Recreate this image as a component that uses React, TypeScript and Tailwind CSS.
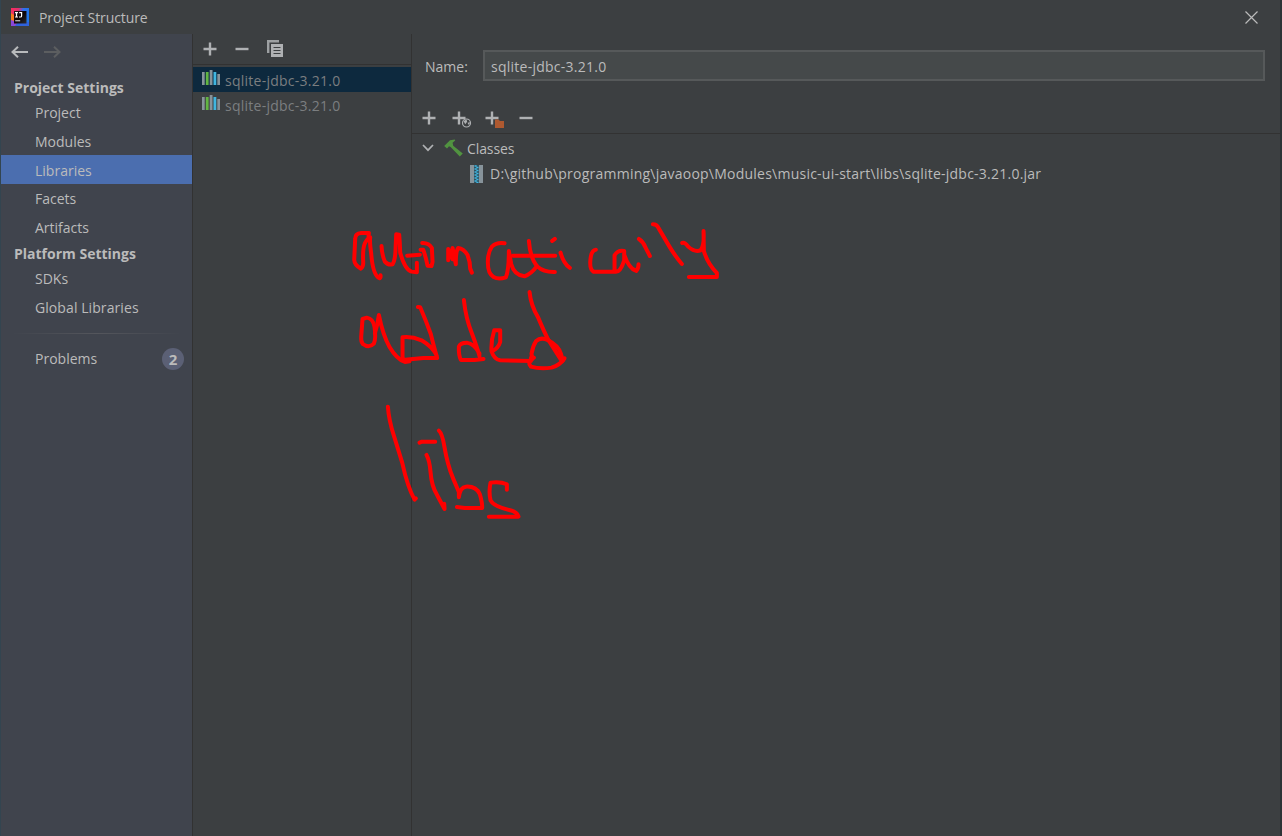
import type { ReactNode } from "react";

function NavItem({ label, className = "" }: { label: string; className?: string }) {
  return <div className={`flex shrink-0 items-center pl-[34px] ${className}`}>{label}</div>;
}

function AppLogo() {
  return (
    <svg width="18" height="18" viewBox="0 0 18 18" className="shrink-0">
      <defs>
        <linearGradient id="lg" x1="0" y1="0" x2="1" y2="0.3">
          <stop offset="0" stopColor="#fb2d5e" />
          <stop offset="0.4" stopColor="#e0306e" />
          <stop offset="0.65" stopColor="#3070f0" />
          <stop offset="1" stopColor="#1f75e8" />
        </linearGradient>
        <linearGradient id="screen" x1="0" y1="0" x2="1" y2="1">
          <stop offset="0" stopColor="#2a1420" />
          <stop offset="0.5" stopColor="#0b0508" />
          <stop offset="1" stopColor="#2c2c30" />
        </linearGradient>
      </defs>
      <rect width="18" height="18" fill="url(#lg)" />
      <path d="M0 5 3 7V14L0 12Z" fill="#f97a20" />
      <path d="M0 12 3 13 6 18H0Z" fill="#8a48d8" />
      <path d="M4 18 7 14H18V18Z" fill="#2f62dc" />
      <rect x="3" y="3" width="12.5" height="12.5" fill="url(#screen)" />
      <path d="M4 4.6H7M5.5 4.6V9M4 9H7M8.2 4.6H10.6V8Q10.6 9 9.5 9H8" fill="none" stroke="#fff" strokeWidth="1.2" />
      <rect x="4.2" y="12" width="5" height="1.4" fill="#aaa" />
    </svg>
  );
}

function Arrow({ right = false }: { right?: boolean }) {
  return (
    <svg width="18" height="14" viewBox="0 0 18 14" fill="none" strokeWidth="2" stroke={right ? "#5c5e60" : "#b8babc"}>
      {right ? <path d="M0 7H15.5M10 1.8 15.5 7 10 12.2" /> : <path d="M17 7H1.5M7 1.8 1.5 7 7 12.2" />}
    </svg>
  );
}

function Plus({ children }: { children?: ReactNode }) {
  return (
    <svg width="22" height="20" viewBox="0 0 22 20" className="shrink-0">
      <path d="M0.5 10H13.5M7 3.5V16.5" stroke="#afb1b3" strokeWidth="2.4" fill="none" />
      {children}
    </svg>
  );
}

function Minus() {
  return (
    <svg width="14" height="20" viewBox="0 0 14 20" className="shrink-0">
      <path d="M0.5 10H13.5" stroke="#afb1b3" strokeWidth="2.4" />
    </svg>
  );
}

function Copy() {
  return (
    <svg width="17" height="18" viewBox="0 0 17 18" className="shrink-0">
      <path d="M1.2 13V1.2H12" fill="none" stroke="#9da0a2" strokeWidth="2.4" />
      <rect x="4" y="4" width="12" height="13" fill="#afb1b3" />
      <path d="M6.5 7.5H13.5M6.5 10.5H13.5M6.5 13.5H13.5" stroke="#3c3f41" />
    </svg>
  );
}

function LibraryIcon() {
  return (
    <svg width="18" height="16" viewBox="0 0 18 16" className="shrink-0">
      <rect x="0" y="2" width="2.7" height="13" fill="#87939a" />
      <rect x="3.8" y="2" width="2.8" height="13" fill="#62b543" />
      <rect x="7.7" y="0" width="2.8" height="15" fill="#87939a" />
      <rect x="11.5" y="2" width="2.8" height="13" fill="#40b6e0" />
      <rect x="15.3" y="4" width="2.7" height="11" fill="#87939a" />
    </svg>
  );
}

function LibraryRow({ selected = false }: { selected?: boolean }) {
  return (
    <div className={`flex h-[25px] items-center gap-[5px] pl-[9px] text-[#7b7e80] ${selected ? "bg-[#0d293e]" : ""}`}>
      <div className="pb-[3px]"><LibraryIcon /></div>
      <span className="pt-[3px] tracking-[0.25px]">sqlite-jdbc-3.21.0</span>
    </div>
  );
}

function Hammer() {
  return (
    <svg width="19" height="18" viewBox="0 0 19 18" className="shrink-0">
      <path d="M0.2 7 6 1.2 10.8 0.4 11.2 1.6 8.6 3.8 9.2 6.8 18.8 14.6 15.8 17.6 6.6 8 5 7.2 3 9.4Z" fill="#519340" />
    </svg>
  );
}

function Archive() {
  return (
    <svg width="13" height="18" viewBox="0 0 13 18" className="shrink-0">
      <rect width="4" height="18" fill="#87939a" />
      <rect x="9" width="4" height="18" fill="#87939a" />
      <rect x="4" width="5" height="18" fill="#31505f" />
      <path d="M4.5 1H6.7M6.3 2.5H8.5M4.5 4H6.7M6.3 5.5H8.5M4.5 7H6.7M6.3 8.5H8.5M4.5 10H6.7M6.3 11.5H8.5M4.5 13H6.7M6.3 14.5H8.5M4.5 16H6.7M6.3 17.4H8.5" stroke="#40b6e0" strokeWidth="1.3" />
    </svg>
  );
}

function Annotation() {
  return (
    <svg
      width="1282"
      height="836"
      viewBox="0 0 1282 836"
      className="pointer-events-none absolute top-0 -left-px"
      fill="none"
      stroke="#ff0000"
      strokeLinecap="round"
      strokeLinejoin="round"
    >
      <g transform="translate(340.2 215.3) scale(0.33333)" strokeWidth="12">
        <path d="M85 62 86 53H63Q45 54 45 70L42 134Q43 150 62 160Q70 155 69 140Q67 100 74 84Q84 66 90 66Q88 80 93 115Q98 180 118 189Q122 188 121 180" />
        <path d="M124 92Q125 118 134 139Q143 150 157 147Q165 135 166 103L168 57 177 58Q179 80 180 112Q194 163 214 169L230 171V142" />
        <path d="M201 121 239 118M246 83Q266 82 275 98L277 140 274 152 262 151Q257 125 249 103H241" />
        <path d="M324 135V101L337 132V98L347 147Q346 110 354 98Q370 100 382 119Q390 140 390 160L395 172" />
        <path d="M493 84Q470 80 455 94Q443 112 443 138Q442 175 460 185Q475 193 497 186Q506 165 506 107L513 146Q522 180 553 183Q573 176 589 154" />
        <path d="M518 121H645M566 77Q570 130 592 154Q610 171 644 170" />
        <path d="M68 386Q62 380 63 365L67 311 80 307Q99 310 103 335Q108 370 101 385Q86 400 68 386" />
        <path d="M104 354Q112 330 116 299Q128 360 148 395Q170 432 194 440L208 438" />
        <path d="M233 275 240 276Q258 318 272 357Q283 402 291 428H250L187 434V366Q215 363 244 375Q278 395 290 422" />
        <path d="M371 254Q377 310 395 354Q412 400 418 423M430 431 403 434H362Q355 420 356 394Q360 382 380 382Q402 385 418 415" />
        <path d="M455 408Q474 400 480 380V345H462Q452 375 454 408Q462 432 480 435L572 437Q570 420 581 427" />
      </g>
      <g transform="translate(530.2 215.3) scale(0.33333)" strokeWidth="12">
        <path d="M66 77 74 71M91 112Q100 145 119 158M197 103Q184 104 181 130Q177 162 190 169H254Q270 173 282 135V107Q263 103 253 120V164M282 118Q296 160 318 167Q325 160 325 147" />
        <path d="M326 71Q340 80 346 97L359 122M368 27Q380 27 386 40L416 91Q433 120 455 146" />
        <path d="M456 83Q464 80 474 94Q494 112 511 105Q523 90 520 47L521 107Q532 145 560 173V185H476" />
        <path d="M-2 230Q2 270 24 307Q42 350 54 373L94 436" />
        <path d="M54 375Q32 364 18 377Q8 392 4 415L6 432Q-10 440 2 454Q30 462 64 457Q90 449 103 429" />
        <path d="M54 375Q84 390 92 415L98 436" />
      </g>
      <g transform="translate(370.2 395.3) scale(0.33333)" strokeWidth="12">
        <path d="M53 34Q56 75 71 121L96 202Q112 275 133 313L137 309" />
        <path d="M148 142 155 139H195M169 179Q178 195 181 230Q184 272 201 300L223 341 222 325" />
        <path d="M206 106Q216 115 222 151Q232 210 249 250L266 290V306Q270 275 287 274Q318 272 329 297Q337 325 336 338H284L260 335" />
        <path d="M410 283V267Q390 258 361 262Q355 290 361 315Q370 333 420 345Q441 350 445 364H356" />
      </g>
    </svg>
  );
}

export default function App() {
  return (
    <div className="relative flex h-[836px] w-[1282px] flex-col overflow-hidden border-r-2 border-l border-r-[#2d3336] border-l-[#334550] bg-[#3c3f41] font-['Open_Sans','Noto_Sans',sans-serif] text-[14px] leading-5 text-[#bbbbbb]">
      <header className="flex h-[34px] shrink-0 items-center justify-between pr-[22.5px] pl-[10px]">
        <div className="flex items-center gap-[10px]">
          <AppLogo />
          <span className="pt-px tracking-[-0.09px]">Project Structure</span>
        </div>
        <svg width="13" height="13" viewBox="0 0 13 13" stroke="#bbbbbb" strokeWidth="1.2">
          <path d="M0.5 0.5 12.5 12.5M12.5 0.5 0.5 12.5" />
        </svg>
      </header>
      <div className="flex min-h-0 flex-1">
        <nav className="flex w-[192px] shrink-0 flex-col border-r border-[#323232] bg-[#40444d]">
          <div className="flex h-9 shrink-0 items-center gap-[15px] pl-[10px]">
            <Arrow />
            <Arrow right />
          </div>
          <div className="flex h-7 shrink-0 items-center pt-[8px] pl-[13px] font-bold">Project Settings</div>
          <NavItem label="Project" className="h-[29px]" />
          <NavItem label="Modules" className="h-7 pt-[2px]" />
          <NavItem label="Libraries" className="h-[29px] bg-[#4b6eaf] pt-[2px]" />
          <NavItem label="Facets" className="h-[29px]" />
          <NavItem label="Artifacts" className="h-[29px]" />
          <div className="flex h-[23px] shrink-0 items-center pl-[13px] font-bold">Platform Settings</div>
          <NavItem label="SDKs" className="h-[28px]" />
          <NavItem label="Global Libraries" className="h-[29px] tracking-[0.08px]" />
          <div className="mx-[10px] mt-[11px] h-px shrink-0 bg-linear-to-r from-transparent via-[#54565c] to-transparent" />
          <div className="mt-[14px] flex h-[22px] items-center justify-between pr-2 pl-[34px]">
            <span>Problems</span>
            <span className="flex size-[22px] items-center justify-center rounded-full bg-[#5b6075] pb-px text-[15px] font-bold">2</span>
          </div>
        </nav>
        <section className="flex w-[219px] shrink-0 flex-col border-r border-[#323232]">
          <div className="flex h-[31px] shrink-0 items-center border-b border-[#323232] pl-[10px]">
            <Plus />
            <div className="ml-[10px] flex items-center gap-[18px]">
              <Minus />
              <Copy />
            </div>
          </div>
          <div className="pt-[2px]">
            <LibraryRow selected />
            <LibraryRow />
          </div>
        </section>
        <main className="flex min-w-0 flex-1 flex-col">
          <div className="mt-4 flex h-[31px] shrink-0 items-center pr-[15px] pl-[13px]">
            <span className="w-[58px] pt-[2px]">Name:</span>
            <div className="flex h-[31px] flex-1 items-center border-2 border-[#56595a] bg-[#45494a] pt-[2px] pl-[6px] tracking-[0.25px]">
              sqlite-jdbc-3.21.0
            </div>
          </div>
          <div className="mt-[22px] flex h-[31px] shrink-0 items-center border-b border-[#323232] pl-[10px]">
            <Plus />
            <div className="ml-[8px] flex items-center gap-[11px]">
              <Plus>
                <circle cx="14.5" cy="15" r="4" fill="#3c3f41" stroke="#afb1b3" strokeWidth="1.2" />
                <path d="M11.5 13 14.5 11.5 15.2 13.8 13.2 16.3ZM15.5 14.8 18 14.3 17 17.3Z" fill="#afb1b3" />
              </Plus>
              <Plus>
                <path d="M10 11.5H13.5L15 13H19V20H10Z" fill="#ae5930" />
              </Plus>
              <div className="ml-px"><Minus /></div>
            </div>
          </div>
          <div className="flex h-[27px] shrink-0 items-center pl-[10px]">
            <svg width="12" height="8" viewBox="0 0 12 8" fill="none" stroke="#afb1b3" strokeWidth="1.7">
              <path d="M1 1 6 6.2 11 1" />
            </svg>
            <div className="ml-[10px] flex items-center gap-[4px]">
              <Hammer />
              <span className="pt-[2px] tracking-[-0.1px]">Classes</span>
            </div>
          </div>
          <div className="flex h-[25px] shrink-0 items-center gap-[7px] pl-[58px]">
            <Archive />
            <span className="tracking-[0.235px]">
              D:\github\programming\javaoop\Modules\music-ui-start\libs\sqlite-jdbc-3.21.0.jar
            </span>
          </div>
        </main>
      </div>
      <Annotation />
    </div>
  );
}
